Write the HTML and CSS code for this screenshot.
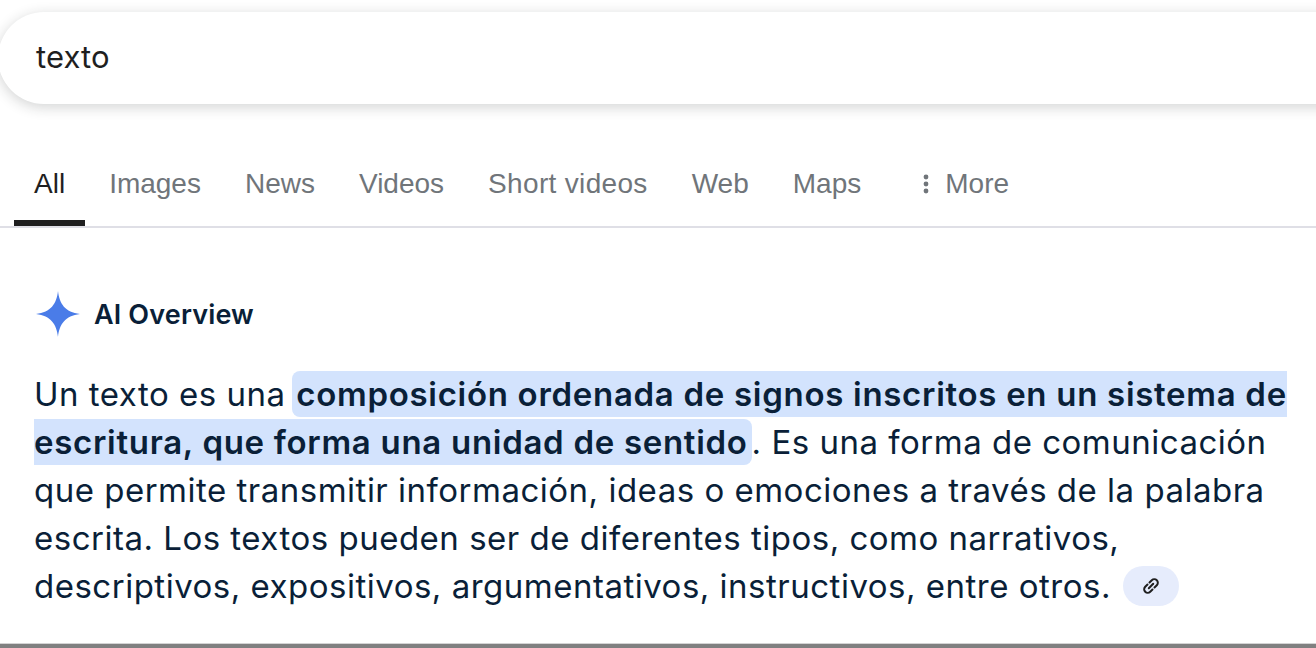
FILE: index.html
```html
<!DOCTYPE html>
<html lang="es">
    <head>
        <meta charset="UTF-8">
        <title>texto</title>
        <link rel="stylesheet" href="styles.css">
    </head>
    <body>
        <div class="search-box">texto</div>
        <ul class="tabs">
            <li class="active">All</li>
            <li>Images</li>
            <li>News</li>
            <li>Videos</li>
            <li class="short">Short videos</li>
            <li>Web</li>
            <li>Maps</li>
            <li class="more">
                <svg width="6" height="22" viewBox="0 0 6 22"><circle cx="3" cy="4" r="2.4"/><circle cx="3" cy="11" r="2.4"/><circle cx="3" cy="18" r="2.4"/></svg>
                More
            </li>
        </ul>
        <div class="overview">
            <div class="overview-head">
                <svg width="46" height="46" viewBox="0 0 46 46"><path fill="#4a7ce8" d="M23 0C24.500 13 30 21 45 23C30 25 24.500 33 23 46C21.500 33 16 25 1 23C16 21 21.500 13 23 0Z"/></svg>
                <h2>AI Overview</h2>
            </div>
            <p>Un texto es una <span class="mark">composición ordenada de signos inscritos en un sistema de escritura, que forma una unidad de sentido</span>. Es una forma de comunicación que permite transmitir información, ideas o emociones a través de la palabra escrita. Los textos pueden ser de diferentes tipos, como narrativos, descriptivos, expositivos, argumentativos, instructivos, entre otros. <span class="link-chip"><svg width="20" height="20" viewBox="0 0 20 20" fill="none" stroke="#1f1f1f" stroke-width="2" stroke-linecap="round"><path d="M8.500 6.500L10.800 4.200A3.300 3.300 0 0 1 15.800 9.200L13.500 11.500"/><path d="M11.500 13.500L9.200 15.800A3.300 3.300 0 0 1 4.200 10.800L6.500 8.500"/><path d="M7.800 12.200L12.200 7.800"/></svg></span></p>
        </div>
        <div class="window-edge"></div>
    </body>
</html>
```

FILE: styles.css
```css
*{
    margin: 0;
    padding: 0;
    box-sizing: border-box;
}
html,body{
    height: 648px;
    overflow: hidden;
}
body{
    position: relative;
    background: #fff;
    font-family: "Inter", "Liberation Sans", sans-serif;
}
.search-box{
    height: 92px;
    margin: 12px -60px 0 -2px;
    padding-left: 38px;
    border-radius: 46px;
    background: #fff;
    box-shadow: 0 3px 14px rgba(32,33,36,.2);
    font-size: 31px;
    line-height: 90px;
    letter-spacing: .1px;
    color: #1f1f1f;
}
.tabs{
    display: flex;
    height: 124px;
    padding: 0 0 0 14px;
    list-style: none;
    border-bottom: 2px solid #dfdfe6;
    font-family: "Liberation Sans", sans-serif;
    font-size: 28px;
    color: #70757a;
}
.tabs li{
    height: 122px;
    padding: 62px 20px 0;
    margin-right: 4px;
    line-height: 36px;
}
.tabs .short{
    letter-spacing: .33px;
}
.tabs .active{
    color: #1f1f1f;
    border-bottom: 6px solid #1f1f1f;
}
.tabs .more{
    display: flex;
    align-items: flex-start;
    gap: 16px;
    margin-left: 18px;
}
.more svg{
    margin-top: 7px;
    fill: #70757a;
}
.overview{
    padding: 63px 20px 0 34px;
    color: #0a1f38;
}
.overview-head{
    display: flex;
    align-items: center;
    gap: 13px;
    margin-left: 1px;
}
.overview-head h2{
    font-size: 27px;
    font-weight: 600;
    letter-spacing: .15px;
}
.overview p{
    margin-top: 33px;
    font-size: 33px;
    line-height: 48px;
    letter-spacing: .5px;
}
.mark{
    margin-left: -3px;
    padding: 3px 4px 3px 4px;
    border-radius: 8px;
    background: #d3e3fd;
    font-weight: 600;
    letter-spacing: .7px;
}
.link-chip{
    display: inline-flex;
    align-items: center;
    justify-content: center;
    width: 56px;
    height: 40px;
    margin-left: 2px;
    border-radius: 20px;
    background: #e6ecfc;
    vertical-align: 2px;
}
.window-edge{
    position: absolute;
    left: 0;
    right: 0;
    bottom: 0;
    height: 5px;
    border-top: 1px solid #d4d4d4;
    background: #808080;
}
```
